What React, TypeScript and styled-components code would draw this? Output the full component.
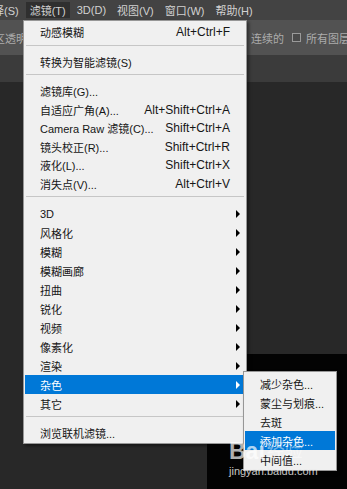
import React from 'react';
import styled, { createGlobalStyle } from 'styled-components';

const GlobalStyle = createGlobalStyle`
  html, body {
    margin: 0;
    padding: 0;
    background: #282828;
  }
  body {
    font-family: "Liberation Sans", "Noto Sans CJK SC", sans-serif;
  }
`;

const Screen = styled.div`
  position: relative;
  width: 347px;
  height: 489px;
  overflow: hidden;
  display: flex;
  flex-direction: column;
  background: #282828;
`;

const MenuBar = styled.div`
  flex: none;
  height: 20px;
  display: flex;
  align-items: center;
  gap: 3px;
  margin-left: -11px;
  background: #434343;
`;

const BarItem = styled.div<{ open?: boolean }>`
  height: 16px;
  padding: 0 4px;
  display: flex;
  align-items: center;
  font-size: 11px;
  color: #d2d2d2;
  white-space: nowrap;
  background: ${({ open }) => (open ? '#2f2f2f' : 'transparent')};
`;

const OptionsBar = styled.div`
  flex: none;
  height: 35px;
  display: flex;
  align-items: center;
  background: #525252;
  font-size: 11px;
  color: #acacac;
  white-space: nowrap;
  overflow: hidden;
`;

const OptionsLeft = styled.div`
  flex: none;
  width: 257px;
  margin-left: -6px;
`;

const OptionsRight = styled.div`
  flex: none;
  display: flex;
  align-items: center;
  gap: 4px;
`;

const CheckBox = styled.span`
  width: 7px;
  height: 7px;
  margin: 0 1px 0 4px;
  border: 1px solid #9a9a9a;
  background: #4a4a4a;
`;

const TabStrip = styled.div`
  flex: none;
  height: 27px;
  background: #3b3b3b;
`;

const Workspace = styled.div`
  flex: 1;
  display: flex;
  justify-content: flex-end;
  align-items: flex-end;
  background: #282828;
`;

const DocCanvas = styled.div`
  width: 140px;
  height: 135px;
  background: #030303;
`;

const Dropdown = styled.div<{ left: number; top: number; width: number }>`
  position: absolute;
  left: ${({ left }) => left}px;
  top: ${({ top }) => top}px;
  width: ${({ width }) => width}px;
  box-sizing: border-box;
  padding: 2px 1px 1px;
  background: #f0f0f0;
  border: 1px solid #979797;
  box-shadow: 2px 2px 3px rgba(0, 0, 0, 0.45);
  font-size: 11px;
  color: #161616;
`;

const Row = styled.div<{ active?: boolean; h: number; indent: number }>`
  height: ${({ h }) => h}px;
  display: flex;
  align-items: center;
  padding: 0 5px 0 ${({ indent }) => indent}px;
  white-space: nowrap;
  background: ${({ active }) => (active ? '#0078d7' : 'transparent')};
  color: ${({ active }) => (active ? '#ffffff' : '#161616')};
`;

const Label = styled.span`
  flex: 1;
`;

const Shortcut = styled.span`
  margin-right: 10px;
  font-size: 12px;
`;

const Arrow = styled.span<{ active?: boolean }>`
  width: 0;
  height: 0;
  margin-left: 6px;
  border-top: 4px solid transparent;
  border-bottom: 4px solid transparent;
  border-left: 4px solid ${({ active }) => (active ? '#ffffff' : '#000000')};
`;

const Separator = styled.div<{ h: number }>`
  height: ${({ h }) => h}px;
  display: flex;
  flex-direction: column;
  padding-top: 3px;
  box-sizing: border-box;
  &::before {
    content: '';
    height: 1px;
    margin: 0 1px;
    background: #c6c6c6;
  }
`;

const Watermark = styled.div`
  position: absolute;
  left: 229px;
  top: 438px;
  display: flex;
  flex-direction: column;
  color: rgba(255, 255, 255, 0.7);
  pointer-events: none;
`;

const WatermarkLogo = styled.div`
  display: flex;
  align-items: center;
  gap: 2px;
  font-size: 23px;
  font-weight: bold;
  line-height: 26px;
  & span:last-child {
    font-size: 18px;
    font-weight: normal;
    color: rgba(255, 255, 255, 0.45);
  }
`;

const WatermarkUrl = styled.div`
  font-size: 11px;
  line-height: 14px;
  color: rgba(235, 235, 235, 0.85);
`;

type Item =
  | { kind: 'sep'; h: number }
  | { kind: 'item'; label: string; shortcut?: string; sub?: boolean; active?: boolean; h: number };

const filterMenu: Item[] = [
  { kind: 'item', label: '动感模糊', shortcut: 'Alt+Ctrl+F', h: 18.5 },
  { kind: 'sep', h: 11 },
  { kind: 'item', label: '转换为智能滤镜(S)', h: 18.5 },
  { kind: 'sep', h: 11 },
  { kind: 'item', label: '滤镜库(G)...', h: 18.5 },
  { kind: 'item', label: '自适应广角(A)...', shortcut: 'Alt+Shift+Ctrl+A', h: 18.5 },
  { kind: 'item', label: 'Camera Raw 滤镜(C)...', shortcut: 'Shift+Ctrl+A', h: 18.5 },
  { kind: 'item', label: '镜头校正(R)...', shortcut: 'Shift+Ctrl+R', h: 18.5 },
  { kind: 'item', label: '液化(L)...', shortcut: 'Shift+Ctrl+X', h: 18.5 },
  { kind: 'item', label: '消失点(V)...', shortcut: 'Alt+Ctrl+V', h: 18.5 },
  { kind: 'sep', h: 11 },
  ...['3D', '风格化', '模糊', '模糊画廊', '扭曲', '锐化', '视频', '像素化', '渲染'].map(
    (label): Item => ({ kind: 'item', label, sub: true, h: 19 })
  ),
  { kind: 'item', label: '杂色', sub: true, active: true, h: 19 },
  { kind: 'item', label: '其它', sub: true, h: 19 },
  { kind: 'sep', h: 10 },
  { kind: 'item', label: '浏览联机滤镜...', h: 19 },
];

const noiseMenu: Item[] = [
  { kind: 'item', label: '减少杂色...', h: 19 },
  { kind: 'item', label: '蒙尘与划痕...', h: 19 },
  { kind: 'item', label: '去斑', h: 19 },
  { kind: 'item', label: '添加杂色...', active: true, h: 19 },
  { kind: 'item', label: '中间值...', h: 19 },
];

function MenuList({ items, indent }: { items: Item[]; indent: number }) {
  return (
    <>
      {items.map((it, i) =>
        it.kind === 'sep' ? (
          <Separator key={i} h={it.h} />
        ) : (
          <Row key={i} h={it.h} active={it.active} indent={indent}>
            <Label>{it.label}</Label>
            {it.shortcut && <Shortcut>{it.shortcut}</Shortcut>}
            {it.sub && <Arrow active={it.active} />}
          </Row>
        )
      )}
    </>
  );
}

export default function App() {
  return (
    <Screen>
      <GlobalStyle />
      <MenuBar>
        <BarItem>择(S)</BarItem>
        <BarItem open>滤镜(T)</BarItem>
        <BarItem>3D(D)</BarItem>
        <BarItem>视图(V)</BarItem>
        <BarItem>窗口(W)</BarItem>
        <BarItem>帮助(H)</BarItem>
      </MenuBar>
      <OptionsBar>
        <OptionsLeft>区透明</OptionsLeft>
        <OptionsRight>
          <span>连续的</span>
          <CheckBox />
          <span>所有图层</span>
        </OptionsRight>
      </OptionsBar>
      <TabStrip />
      <Workspace>
        <DocCanvas />
      </Workspace>

      <Dropdown left={23} top={20} width={224}>
        <MenuList items={filterMenu} indent={15} />
      </Dropdown>
      <Dropdown left={243} top={371} width={94}>
        <MenuList items={noiseMenu} indent={15} />
      </Dropdown>

      <Watermark>
        <WatermarkLogo>
          <span>Bai</span>
          <span>经验</span>
        </WatermarkLogo>
        <WatermarkUrl>jingyan.baidu.com</WatermarkUrl>
      </Watermark>
    </Screen>
  );
}
